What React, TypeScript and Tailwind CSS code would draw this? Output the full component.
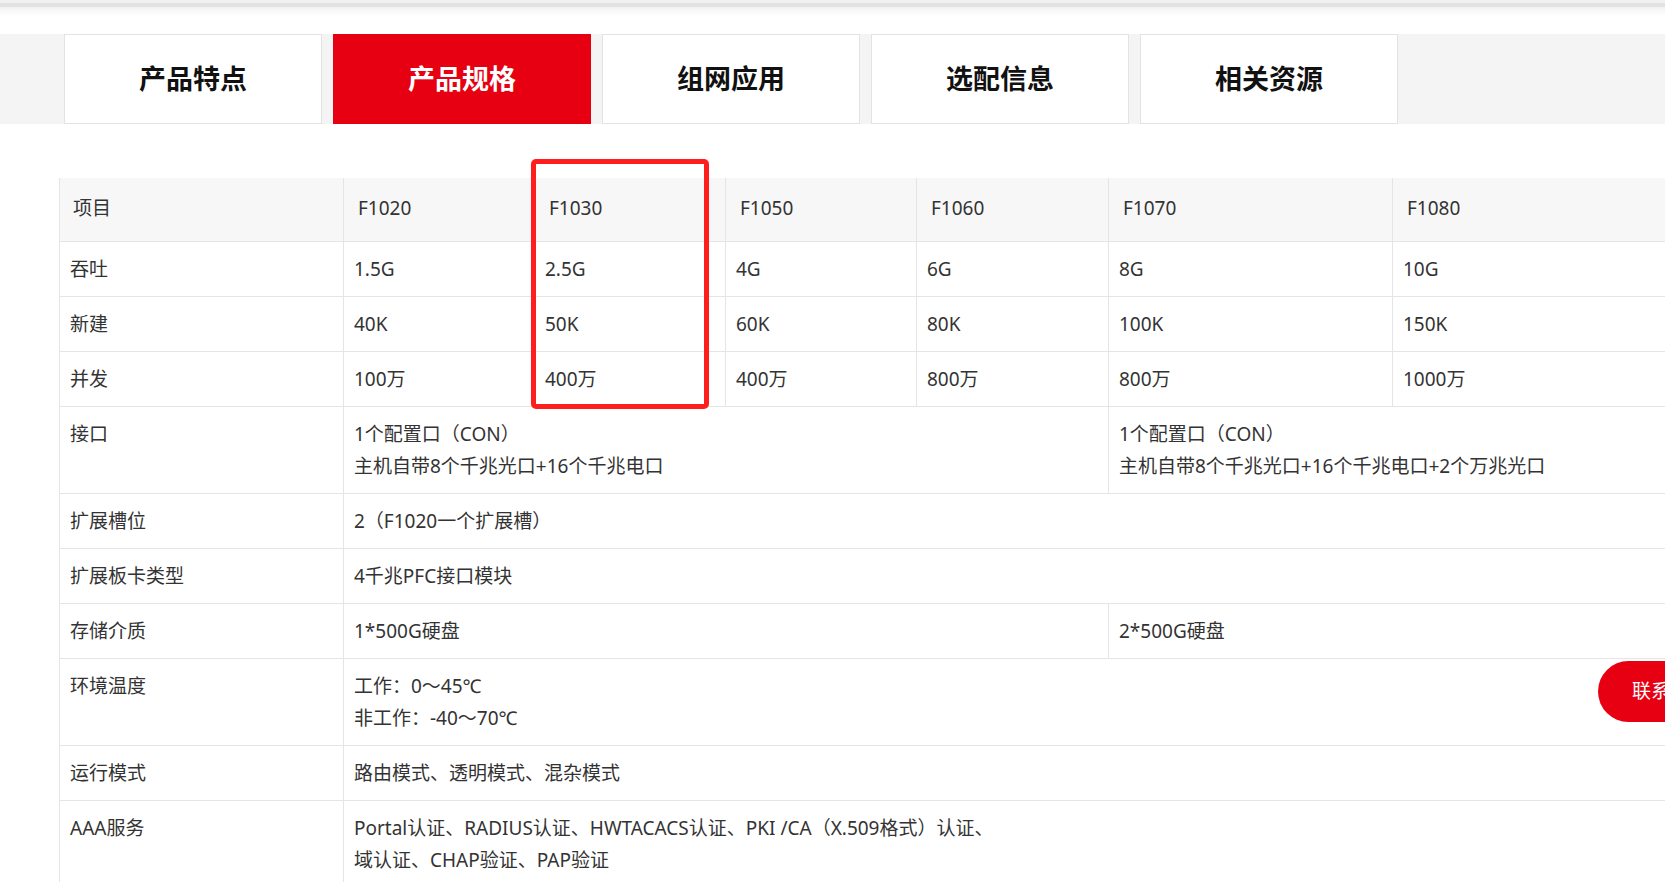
import type { ReactNode } from "react";

const tabs = ["产品特点", "产品规格", "组网应用", "选配信息", "相关资源"];
const activeTab = "产品规格";

const models = ["F1020", "F1030", "F1050", "F1060", "F1070", "F1080"];

const perfRows: Array<{ label: string; values: string[] }> = [
  { label: "吞吐", values: ["1.5G", "2.5G", "4G", "6G", "8G", "10G"] },
  { label: "新建", values: ["40K", "50K", "60K", "80K", "100K", "150K"] },
  { label: "并发", values: ["100万", "400万", "400万", "800万", "800万", "1000万"] },
];

const font = "font-['Noto_Sans','Noto_Sans_CJK_SC',sans-serif]";

function Cell({ children, span = 1 }: { children: ReactNode; span?: number }) {
  return (
    <td
      colSpan={span}
      className="border border-[#e5e5e5] pl-[10px] pr-2 pt-[11px] pb-[11px] align-top leading-[32px]"
    >
      {children}
    </td>
  );
}

function Row({ label, children }: { label: string; children: ReactNode }) {
  return (
    <tr>
      <td className="border border-[#e5e5e5] pl-[10px] pt-[11px] pb-[11px] align-top leading-[32px]">{label}</td>
      {children}
    </tr>
  );
}

export default function App() {
  return (
    <div className={`relative h-[882px] w-[1665px] overflow-hidden bg-white text-[#333] ${font}`}>
      {/* header shadow */}
      <div className="h-[3px] bg-[#f1f1f1]" />
      <div className="h-[4px] bg-[#e2e2e2]" />
      <div className="h-[9px] bg-gradient-to-b from-[#f2f2f2] to-white" />

      <div className="mt-[18px] flex h-[90px] gap-[11px] bg-[#f4f4f4] pl-[64px]">
        {tabs.map((t) => (
          <div
            key={t}
            className={
              t === activeTab
                ? "flex w-[258px] items-center justify-center bg-[#e60012] text-[27px] font-bold text-white"
                : "flex w-[258px] items-center justify-center border border-[#e3e3e3] bg-white text-[27px] font-bold text-[#111]"
            }
          >
            {t}
          </div>
        ))}
      </div>

      <div className="mt-[54px] pl-[59px]">
        <table className="w-[1616px] table-fixed border-collapse text-[19px]">
          <colgroup>
            <col className="w-[284px]" />
            <col className="w-[191px]" />
            <col className="w-[191px]" />
            <col className="w-[191px]" />
            <col className="w-[192px]" />
            <col className="w-[284px]" />
            <col className="w-[283px]" />
          </colgroup>
          <thead>
            <tr className="bg-[#f7f7f7]">
              <th className="border-x border-b border-[#e5e5e5] pl-[13px] pt-[14px] pb-[17px] text-left font-normal leading-[32px]">
                项目
              </th>
              {models.map((m) => (
                <th
                  key={m}
                  className="border-x border-b border-[#e5e5e5] pl-[14px] pt-[14px] pb-[17px] text-left font-normal leading-[32px]"
                >
                  {m}
                </th>
              ))}
            </tr>
          </thead>
          <tbody>
            {perfRows.map((r) => (
              <Row key={r.label} label={r.label}>
                {r.values.map((v, i) => (
                  <Cell key={i}>{v}</Cell>
                ))}
              </Row>
            ))}
            <Row label="接口">
              <Cell span={4}>
                1个配置口（CON）
                <br />
                主机自带8个千兆光口+16个千兆电口
              </Cell>
              <Cell span={2}>
                1个配置口（CON）
                <br />
                主机自带8个千兆光口+16个千兆电口+2个万兆光口
              </Cell>
            </Row>
            <Row label="扩展槽位">
              <Cell span={6}>2（F1020一个扩展槽）</Cell>
            </Row>
            <Row label="扩展板卡类型">
              <Cell span={6}>4千兆PFC接口模块</Cell>
            </Row>
            <Row label="存储介质">
              <Cell span={4}>1*500G硬盘</Cell>
              <Cell span={2}>2*500G硬盘</Cell>
            </Row>
            <Row label="环境温度">
              <Cell span={6}>
                工作：0～45℃
                <br />
                非工作：-40～70℃
              </Cell>
            </Row>
            <Row label="运行模式">
              <Cell span={6}>路由模式、透明模式、混杂模式</Cell>
            </Row>
            <Row label="AAA服务">
              <Cell span={6}>
                Portal认证、RADIUS认证、HWTACACS认证、PKI /CA（X.509格式）认证、
                <br />
                域认证、CHAP验证、PAP验证
              </Cell>
            </Row>
          </tbody>
        </table>
      </div>

      {/* annotation box */}
      <div className="absolute left-[531px] top-[159px] h-[250px] w-[178px] rounded-[5px] border-[5px] border-[#ff1e1e]" />

      {/* floating contact button */}
      <div className="absolute left-[1598px] top-[661px] flex h-[61px] w-[160px] items-center rounded-l-full bg-[#e60012] pl-[34px] text-[19px] text-white">
        联系我们
      </div>
    </div>
  );
}
